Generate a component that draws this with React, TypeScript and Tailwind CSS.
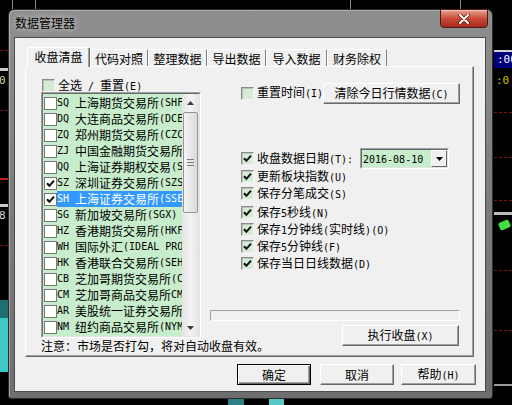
import type { ReactNode } from "react"

const ASCII = /^[\x20-\x7e]+$/

// SimSun-like mix: latin runs are half width (6px), CJK 12px
function Txt({ s }: { s: string }) {
  return (
    <>
      {s
        .split(/([\x20-\x7e]+)/)
        .filter(Boolean)
        .map((p, i) =>
          ASCII.test(p) ? (
            <span key={i} className="whitespace-pre font-['DejaVu_Sans_Mono',monospace] text-[10px]">
              {p}
            </span>
          ) : (
            <span key={i}>{p}</span>
          )
        )}
    </>
  )
}

function Tick() {
  return (
    <svg viewBox="0 0 9 9" className="h-[9px] w-[9px]">
      <path d="M1 4.2 L3.4 6.8 L8 1.6" fill="none" stroke="#111" strokeWidth="2" />
    </svg>
  )
}

function Box3D({ on = false }: { on?: boolean }) {
  return (
    <span className="flex h-[13px] w-[13px] shrink-0 items-center justify-center border border-b-[#f4f4f4] border-l-[#8a8a8a] border-r-[#f4f4f4] border-t-[#8a8a8a] bg-[#d4ecd4] shadow-[inset_1px_1px_0_#b8c4b8]">
      {on && <Tick />}
    </span>
  )
}

function Btn({ children, className = "", def = false }: { children: ReactNode; className?: string; def?: boolean }) {
  return (
    <div
      className={`flex h-[21px] items-center justify-center bg-[#f0f0f0] ${
        def
          ? "border border-black shadow-[inset_1px_1px_0_#fff,inset_-1px_-1px_0_#696969,inset_-2px_-2px_0_#a0a0a0]"
          : "border border-b-[#696969] border-l-white border-r-[#696969] border-t-white shadow-[inset_-1px_-1px_0_#a0a0a0]"
      } ${className}`}
    >
      <span className="pt-px">{children}</span>
    </div>
  )
}

const markets = [
  { code: "SQ", name: "上海期货交易所(SHFE)" },
  { code: "DQ", name: "大连商品交易所(DCE)" },
  { code: "ZQ", name: "郑州期货交易所(CZCE)" },
  { code: "ZJ", name: "中国金融期货交易所(CFFEX)" },
  { code: "QQ", name: "上海证券期权交易(SHOP)" },
  { code: "SZ", name: "深圳证券交易所(SZSE)", on: true },
  { code: "SH", name: "上海证券交易所(SSE)", on: true, sel: true },
  { code: "SG", name: "新加坡交易所(SGX)" },
  { code: "HZ", name: "香港期货交易所(HKFE)" },
  { code: "WH", name: "国际外汇(IDEAL PRO)" },
  { code: "HK", name: "香港联合交易所(SEHK)" },
  { code: "CB", name: "芝加哥期货交易所(CBOT)" },
  { code: "CM", name: "芝加哥商品交易所CME)" },
  { code: "AR", name: "美股统一证券交易所(ARCA)" },
  { code: "NM", name: "纽约商品交易所(NYMEX)" },
]

function MarketList() {
  return (
    <div className="h-[246px] border border-b-white border-l-[#a0a0a0] border-r-white border-t-[#a0a0a0]">
      <div className="flex h-full border border-b-[#e3e3e3] border-l-[#696969] border-r-[#e3e3e3] border-t-[#696969]">
        <div className="flex-1 overflow-hidden bg-[#c7edcc] pt-px">
          {markets.map((m) => (
            <div key={m.code} className="flex h-[16px] items-center pl-px">
              <span className="flex h-[13px] w-[13px] shrink-0 items-center justify-center border border-[#777] bg-white">
                {m.on && <Tick />}
              </span>
              <span
                className={`flex h-[16px] flex-1 items-center overflow-hidden whitespace-nowrap ${
                  m.sel ? "bg-[#3399ff] text-white" : ""
                }`}
              >
                <Txt s={`${m.code} ${m.name}`} />
              </span>
            </div>
          ))}
        </div>
        <div className="flex w-[17px] flex-col bg-gradient-to-r from-[#e4e4e4] via-[#f3f3f3] to-[#e4e4e4]">
          <div className="flex h-[17px] items-center justify-center">
            <svg viewBox="0 0 7 4" className="h-[4px] w-[7px]">
              <path d="M0 4 L3.5 0 L7 4Z" fill="#3a3a3a" />
            </svg>
          </div>
          <div className="flex-1 px-px pt-px">
            <div className="flex h-[101px] flex-col items-center justify-center gap-[2px] rounded-[2px] border border-[#959595] bg-gradient-to-r from-[#f4f4f4] to-[#d9d9d9]">
              <span className="h-px w-[7px] bg-[#7a7a7a]" />
              <span className="h-px w-[7px] bg-[#7a7a7a]" />
              <span className="h-px w-[7px] bg-[#7a7a7a]" />
            </div>
          </div>
          <div className="flex h-[17px] items-center justify-center">
            <svg viewBox="0 0 7 4" className="h-[4px] w-[7px]">
              <path d="M0 0 L3.5 4 L7 0Z" fill="#3a3a3a" />
            </svg>
          </div>
        </div>
      </div>
    </div>
  )
}

function CheckRow({ label, className = "" }: { label: string; className?: string }) {
  return (
    <div className={`flex h-[17px] items-center pl-[31px] ${className}`}>
      <Box3D on />
      <span className="ml-[3px] whitespace-nowrap">
        <Txt s={label} />
      </span>
    </div>
  )
}

const tabs = [
  { t: "代码对照", w: "w-[58px]" },
  { t: "整理数据", w: "w-[59px]" },
  { t: "导出数据", w: "w-[59px]" },
  { t: "导入数据", w: "w-[61px]" },
  { t: "财务除权", w: "w-[60px]" },
]

function Tabs() {
  return (
    <div className="flex h-[19px] items-end pl-[2px]">
      <div className="relative z-10 -mb-px flex h-[20px] w-[63px] items-center justify-center rounded-t-[2px] border-l border-r border-t border-l-white border-r-[#696969] border-t-white bg-[#f0f0f0] pb-px shadow-[inset_-1px_0_0_#a0a0a0]">
        收盘清盘
      </div>
      {tabs.map((t) => (
        <div
          key={t.t}
          className={`flex h-[17px] items-center justify-center border-l border-r border-t border-l-white border-r-[#808080] border-t-white pt-[2px] ${t.w}`}
        >
          {t.t}
        </div>
      ))}
    </div>
  )
}

function Panel() {
  return (
    <div className="flex h-[291px] w-[449px] border border-b-[#696969] border-l-white border-r-[#696969] border-t-white pl-[15px] pt-[12px] shadow-[inset_-1px_-1px_0_#a0a0a0]">
      <div className="flex w-[160px] flex-col">
        <div className="flex h-[13px] items-center gap-[3px] pl-px">
          <Box3D />
          <span className="whitespace-nowrap">
            <Txt s="全选 / 重置(E)" />
          </span>
        </div>
        <MarketList />
        <div className="mt-px whitespace-nowrap">注意：市场是否打勾，将对自动收盘有效。</div>
      </div>

      <div className="ml-[9px] flex flex-1 flex-col">
        <div className="mt-[4px] flex h-[20px] items-center pl-[31px]">
          <Box3D />
          <span className="ml-[3px] w-[66px] whitespace-nowrap">
            <Txt s="重置时间(I)" />
          </span>
          <Btn className="h-[20px] w-[137px]">
            <Txt s="清除今日行情数据(C)" />
          </Btn>
        </div>

        <div className="mt-[45px] flex h-[21px] items-center pl-[31px]">
          <Box3D on />
          <span className="ml-[3px] w-[103px] whitespace-nowrap">
            <Txt s="收盘数据日期(T):" />
          </span>
          <div className="h-[21px] w-[89px] border border-b-white border-l-[#a0a0a0] border-r-white border-t-[#a0a0a0]">
            <div className="flex h-full items-center border border-b-[#e3e3e3] border-l-[#696969] border-r-[#e3e3e3] border-t-[#696969] bg-[#c7edcc] pl-[1px]">
              <span className="flex-1">
                <Txt s="2016-08-10" />
              </span>
              <div className="flex h-[17px] w-[16px] items-center justify-center border border-b-[#696969] border-l-white border-r-[#696969] border-t-white bg-[#f0f0f0]">
                <svg viewBox="0 0 7 4" className="h-[4px] w-[7px]">
                  <path d="M0 0 L3.5 4 L7 0Z" fill="#000" />
                </svg>
              </div>
            </div>
          </div>
        </div>

        <CheckRow label="更新板块指数(U)" className="-mt-px" />
        <CheckRow label="保存分笔成交(S)" />
        <CheckRow label="保存5秒线(N)" className="mt-[2px]" />
        <CheckRow label="保存1分钟线(实时线)(O)" />
        <CheckRow label="保存5分钟线(F)" />
        <CheckRow label="保存当日日线数据(D)" />

        <div className="mt-[38px] h-[11px] w-[250px] border border-b-white border-l-[#a0a0a0] border-r-white border-t-[#a0a0a0] bg-[#f0f0f0]" />

        <Btn className="ml-[132px] mt-[4px] h-[20px] w-[117px]">
          <Txt s="执行收盘(X)" />
        </Btn>
      </div>
    </div>
  )
}

function Backdrop() {
  return (
    <>
      <div className="absolute left-[12px] top-0 h-[9px] w-px bg-[#8a8a8a]" />
      <div className="absolute left-[35px] top-0 h-[9px] w-px bg-[#8a8a8a]" />
      <div className="absolute left-[350px] top-0 h-[9px] w-px bg-[#8a8a8a]" />
      <div className="absolute left-[460px] top-0 h-[9px] w-px bg-[#8a8a8a]" />

      <div className="absolute left-0 top-[50px] w-[8px] border-t border-dashed border-[#7a1414]" />
      <div className="absolute left-0 top-[68px] h-[3px] w-[8px] bg-[#c8c8c8]" />
      <div className="absolute -left-[1px] top-[74px] font-['DejaVu_Sans_Mono',monospace] text-[11px] leading-[14px] text-[#d8d8a8]">0</div>
      <div className="absolute left-0 top-[110px] w-[8px] border-t border-dashed border-[#7a1414]" />
      <div className="absolute left-0 top-[178px] h-[2px] w-[8px] bg-[#c02020]" />
      <div className="absolute left-0 top-[204px] h-[3px] w-[8px] bg-[#c8c8c8]" />
      <div className="absolute -left-[1px] top-[209px] font-['DejaVu_Sans_Mono',monospace] text-[11px] leading-[14px] text-[#d8d8d8]">8</div>
      <div className="absolute left-0 top-[245px] w-[8px] border-t border-dashed border-[#7a1414]" />
      <div className="absolute left-0 top-[300px] h-[18px] w-[8px] bg-[#1f6f70]" />
      <div className="absolute left-0 top-[318px] h-[54px] w-[8px] bg-[#3fc8c8]" />

      <div className="absolute left-[494px] top-[50px] h-[2px] w-[18px] bg-[#d0d0d0]" />
      <div className="absolute left-[494px] top-[52px] h-[16px] w-[18px] bg-[#00007a] pl-[3px] font-['DejaVu_Sans_Mono',monospace] text-[11px] leading-[16px] text-white">:00</div>
      <div className="absolute left-[496px] top-[74px] font-['DejaVu_Sans_Mono',monospace] text-[11px] leading-[14px] text-[#c8c800]">:0</div>
      <div className="absolute left-[494px] top-[112px] w-[18px] border-t border-dashed border-[#7a1414]" />
      <div className="absolute left-[494px] top-[157px] w-[18px] border-t border-dashed border-[#7a1414]" />
      <div className="absolute left-[494px] top-[200px] w-[18px] border-t border-dashed border-[#7a1414]" />
      <div className="absolute left-[494px] top-[212px] h-[3px] w-[18px] bg-[#bdbdbd]" />
      <div className="absolute left-[499px] top-[221px] h-[8px] w-[11px] -rotate-[25deg] rounded-[2px] bg-[#3fe03f]" />
      <div className="absolute left-[494px] top-[270px] w-[18px] border-t border-dashed border-[#7a1414]" />
      <div className="absolute left-[494px] top-[330px] w-[18px] border-t border-dashed border-[#7a1414]" />
      <div className="absolute left-[494px] top-[384px] h-[2px] w-[18px] bg-[#9a9a9a]" />

      <div className="absolute left-[228px] top-[399px] h-[6px] w-[16px] bg-[#2f7f86]" />
      <div className="absolute left-[269px] top-[399px] h-[6px] w-[15px] bg-[#58c8c8]" />
    </>
  )
}

export default function App() {
  return (
    <div className="relative h-[405px] w-[512px] overflow-hidden bg-black font-['Noto_Sans_CJK_SC',sans-serif] text-[12px] leading-[14px] text-black">
      <Backdrop />

      <div className="absolute left-[8px] top-[9px] flex h-[390px] w-[485px] flex-col rounded-b-[3px] rounded-t-[6px] border border-[#2c2c2c] bg-gradient-to-b from-[#8e8e8e] via-[#7c7c7c] to-[#6e6e6e] pb-[6px] pl-[5px] pr-[6px] shadow-[inset_1px_1px_0_rgba(255,255,255,0.3)]">
        <div className="flex h-[27px] items-center pb-[2px] pl-px [text-shadow:0_0_6px_rgba(255,255,255,0.8)]">
          数据管理器
        </div>

        {/* close button */}
        <div className="absolute right-[4px] top-[-1px] flex h-[19px] w-[48px] items-center justify-center rounded-b-[4px] border border-[#4a1a12] bg-gradient-to-b from-[#e5a293] via-[#c84a38] to-[#a8281c] shadow-[inset_0_1px_0_rgba(255,255,255,0.4)]">
          <svg viewBox="0 0 12 10" className="h-[10px] w-[12px]">
            <path d="M2 1 L10 9 M10 1 L2 9" stroke="#5a1a10" strokeWidth="3.4" strokeLinecap="round" />
            <path d="M2 1 L10 9 M10 1 L2 9" stroke="#fff" strokeWidth="2" strokeLinecap="round" />
          </svg>
        </div>

        <div className="flex flex-1 flex-col border border-[#4c4c4c] bg-[#f0f0f0] pl-[10px] pr-[9px] pt-[9px]">
          <Tabs />
          <Panel />
          <div className="mt-[7px] flex justify-end">
            <Btn def className="w-[74px]">确定</Btn>
            <Btn className="ml-[9px] w-[74px]">取消</Btn>
            <Btn className="ml-[7px] w-[75px]">
              <Txt s="帮助(H)" />
            </Btn>
          </div>
        </div>
      </div>
    </div>
  )
}
